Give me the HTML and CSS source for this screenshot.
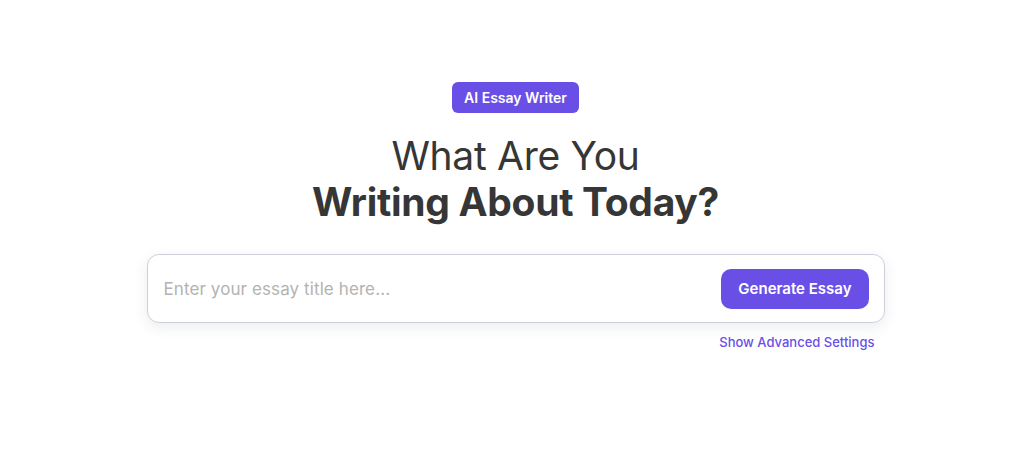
FILE: index.html
```html
<!DOCTYPE html>
<html lang="en">
<head>
<meta charset="utf-8">
<title>AI Essay Writer</title>
<link rel="stylesheet" href="styles.css">
</head>
<body>
<main class="hero">
  <span class="badge">AI Essay Writer</span>
  <h1 class="title"><span class="title-light">What Are You</span><span class="title-bold">Writing About Today?</span></h1>
  <div class="form-wrap">
    <form class="prompt">
      <input class="prompt-input" type="text" placeholder="Enter your essay title here...">
      <button class="prompt-btn" type="button">Generate Essay</button>
    </form>
    <div class="advanced"><a class="advanced-link" href="#">Show Advanced Settings</a></div>
  </div>
</main>
</body>
</html>
```
FILE: styles.css
```css
* { box-sizing: border-box; }
html, body { margin: 0; padding: 0; background: #ffffff; }
body { font-family: Inter, "Noto Sans", sans-serif; color: #363636; }

.hero {
  display: flex;
  flex-direction: column;
  align-items: center;
  padding: 82px 0 0 7px;
}

.badge {
  display: inline-block;
  background: #6a4fe7;
  color: #ffffff;
  font-size: 14px;
  font-weight: 600;
  line-height: 19px;
  padding: 6px 12.5px;
  border-radius: 6px;
}

.title {
  margin: 20px 0 0;
  display: flex;
  flex-direction: column;
  align-items: center;
  font-size: 39px;
  line-height: 46px;
  color: #363636;
  letter-spacing: -0.3px;
}
.title-light { font-weight: 400; }
.title-bold { font-weight: 700; }

.form-wrap {
  width: 738px;
  margin-top: 29px;
}

.prompt {
  display: flex;
  align-items: center;
  height: 69px;
  border: 1px solid #cdd0da;
  border-radius: 12px;
  background: #fff;
  box-shadow: 0 4px 14px rgba(30, 40, 70, 0.09);
  padding: 0 15px 0 16px;
  margin: 0;
}

.prompt-input {
  flex: 1;
  border: none;
  outline: none;
  background: transparent;
  font-family: inherit;
  font-size: 17px;
  letter-spacing: 0.1px;
  color: #333;
  padding: 0;
}
.prompt-input::placeholder { color: #b3b3b3; }

.prompt-btn {
  height: 40px;
  padding: 0 17px;
  border: none;
  border-radius: 10px;
  background: #6a4fe7;
  color: #fff;
  font-family: inherit;
  font-size: 15px;
  font-weight: 600;
  cursor: pointer;
}

.advanced {
  display: flex;
  justify-content: flex-end;
  padding-right: 10px;
  margin-top: 11px;
}
.advanced-link {
  color: #6a4fe7;
  font-size: 13px;
  font-weight: 500;
  text-decoration: none;
}
```
